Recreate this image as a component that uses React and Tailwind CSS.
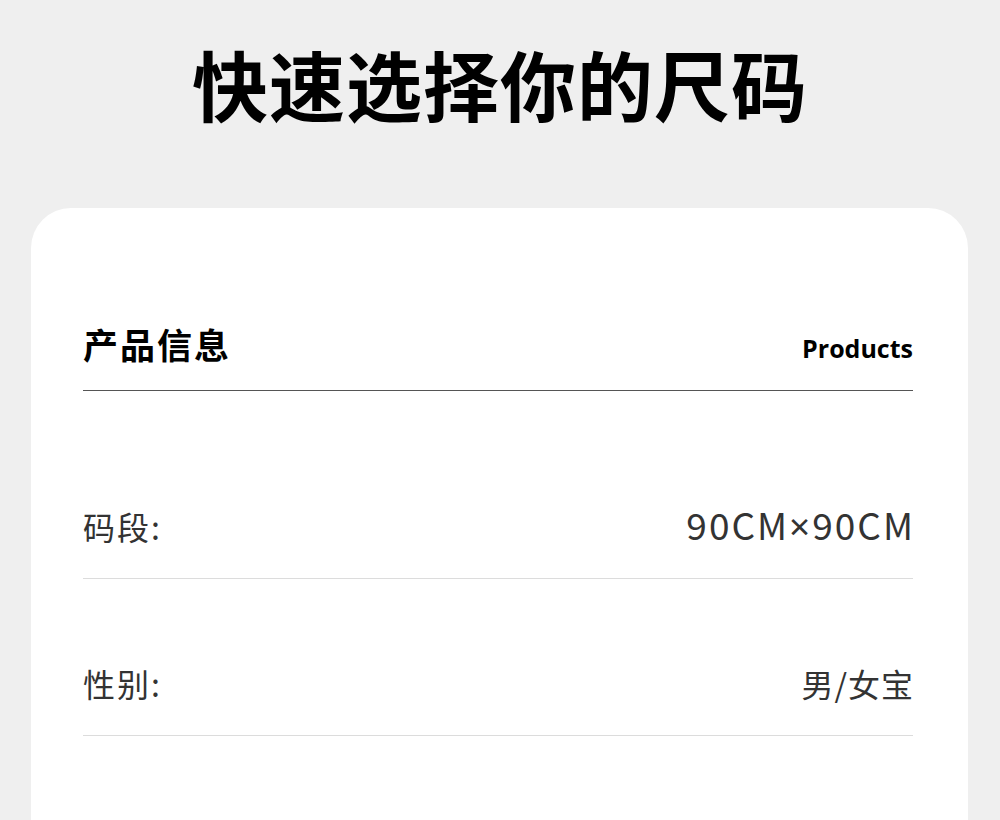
export default function App() {
  const cjk = { fontFamily: '"Noto Sans CJK SC", "Noto Sans", sans-serif' };
  return (
    <div className="w-[1000px] h-[820px] overflow-hidden bg-[#efefef]" style={cjk}>
      <div className="h-[208px] pt-[45px] flex justify-center">
        <h1 className="text-[76px] leading-[76px] font-bold text-black tracking-[1px]">快速选择你的尺码</h1>
      </div>
      <div className="ml-[31px] w-[937px] h-[700px] bg-white rounded-t-[40px]">
        <div className="ml-[52px] w-[830px]">
          <div className="pt-[118px] pb-[29px] flex justify-between items-end border-b border-[#555]">
            <div className="text-[35px] leading-[35px] font-bold text-black tracking-[2px]">产品信息</div>
            <div className="text-[25px] leading-[25px] font-bold text-black" style={{ fontFamily: '"Open Sans", sans-serif' }}>Products</div>
          </div>
          <div className="mt-[31px]" />
          <div className="h-[157px] pb-[36px] flex justify-between items-end border-b border-[#dcdcdc]">
            <div className="text-[32px] leading-[32px] text-[#333] tracking-[2px]">码段:</div>
            <div className="text-[37px] leading-[32px] text-[#333] tracking-[2px] mr-[-2px]">
              90CM<span style={{ fontFamily: '"Noto Sans", sans-serif' }}>×</span>90CM
            </div>
          </div>
          <div className="h-[157px] pb-[36px] flex justify-between items-end border-b border-[#dcdcdc]">
            <div className="text-[32px] leading-[32px] text-[#333] tracking-[2px]">性别:</div>
            <div className="text-[32px] leading-[32px] text-[#333] tracking-[1px] mr-[-1px]">男/女宝</div>
          </div>
        </div>
      </div>
    </div>
  );
}
